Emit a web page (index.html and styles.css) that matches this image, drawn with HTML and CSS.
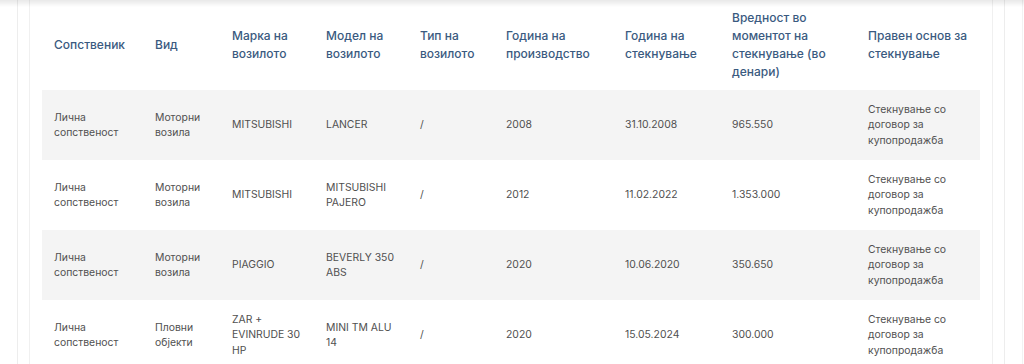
FILE: index.html
```html
<!DOCTYPE html>
<html lang="mk">
<head>
<meta charset="utf-8">
<title>Возила</title>
<link rel="stylesheet" href="styles.css">
</head>
<body>
<div class="topshade"></div>
<div class="page">
  <div class="outer">
    <div class="card">
      <table class="data">
        <colgroup>
          <col class="c1"><col class="c2"><col class="c3"><col class="c4"><col class="c5"><col class="c6"><col class="c7"><col class="c8"><col class="c9">
        </colgroup>
        <thead>
          <tr>
            <th>Сопственик</th>
            <th>Вид</th>
            <th>Марка на возилото</th>
            <th>Модел на возилото</th>
            <th>Тип на возилото</th>
            <th>Година на производство</th>
            <th>Година на стекнување</th>
            <th>Вредност во моментот на стекнување (во денари)</th>
            <th>Правен основ за стекнување</th>
          </tr>
        </thead>
        <tbody>
          <tr class="alt">
            <td>Лична сопственост</td><td>Моторни возила</td><td>MITSUBISHI</td><td>LANCER</td><td>/</td><td>2008</td><td>31.10.2008</td><td>965.550</td><td>Стекнување со договор за купопродажба</td>
          </tr>
          <tr>
            <td>Лична сопственост</td><td>Моторни возила</td><td>MITSUBISHI</td><td>MITSUBISHI PAJERO</td><td>/</td><td>2012</td><td>11.02.2022</td><td>1.353.000</td><td>Стекнување со договор за купопродажба</td>
          </tr>
          <tr class="alt">
            <td>Лична сопственост</td><td>Моторни возила</td><td>PIAGGIO</td><td>BEVERLY 350 ABS</td><td>/</td><td>2020</td><td>10.06.2020</td><td>350.650</td><td>Стекнување со договор за купопродажба</td>
          </tr>
          <tr>
            <td>Лична сопственост</td><td>Пловни објекти</td><td>ZAR + EVINRUDE 30 HP</td><td>MINI TM ALU 14</td><td>/</td><td>2020</td><td>15.05.2024</td><td>300.000</td><td>Стекнување со договор за купопродажба</td>
          </tr>
        </tbody>
      </table>
    </div>
  </div>
  <div class="rail"></div>
</div>
</body>
</html>
```
FILE: styles.css
```css
html, body {
  margin: 0;
  padding: 0;
  background: #ffffff;
  font-family: Inter, "Noto Sans", "DejaVu Sans", sans-serif;
  overflow: hidden;
}

.topshade {
  position: fixed;
  top: 0;
  left: 0;
  right: 0;
  height: 7px;
  background: linear-gradient(to bottom, rgba(0,0,0,0.09), rgba(0,0,0,0));
  pointer-events: none;
}

.page {
  display: flex;
  padding-left: 17px;
  min-height: 364px;
}

.outer {
  width: 988px;
  padding: 0 11px;
  box-sizing: border-box;
  border-left: 1px solid #ededed;
  border-right: 1px solid #ededed;
}

.card {
  width: 964px;
  box-sizing: border-box;
  padding: 0 12px;
  border-left: 1px solid #f0f0f0;
  border-right: 1px solid #f0f0f0;
  min-height: 364px;
}

.rail {
  margin-left: 17px;
  border-left: 1px solid #f2f2f2;
}

.data {
  width: 938px;
  border-collapse: collapse;
  table-layout: fixed;
}

.c1 { width: 101px; }
.c2 { width: 77px; }
.c3 { width: 94px; }
.c4 { width: 94px; }
.c5 { width: 86px; }
.c6 { width: 119px; }
.c7 { width: 107px; }
.c8 { width: 136px; }
.c9 { width: 124px; }

.data th {
  text-align: left;
  font-weight: 500;
  font-size: 12px;
  line-height: 18px;
  color: #3a5a80;
  padding: 9px 12px;
  height: 72px;
  vertical-align: middle;
}

.data td {
  font-size: 10.4px;
  line-height: 15.5px;
  color: #505050;
  padding: 0 12px;
  height: 70px;
  vertical-align: middle;
}

.data tr.alt td {
  background: #f4f4f4;
}
```
